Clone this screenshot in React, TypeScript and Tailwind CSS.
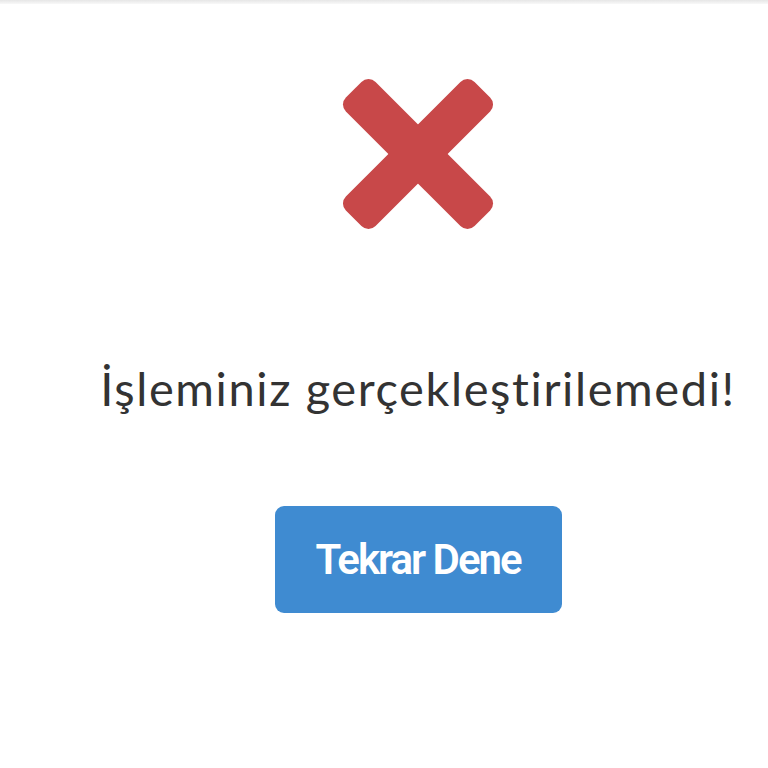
export default function App() {
  return (
    <div className="w-[768px] h-[768px] bg-white relative overflow-hidden">
      <div className="h-[4px] bg-gradient-to-b from-[#e6e6e6] to-[#f8f8f8]" />
      <div className="flex flex-col items-center pl-[68px]">
        <svg width="160" height="160" viewBox="0 0 160 160" className="mt-[70px]">
          <g transform="translate(80 80) rotate(45)" fill="#c84849">
            <rect x="-91" y="-21" width="182" height="42" rx="10" />
            <rect x="-21" y="-91" width="42" height="182" rx="10" />
          </g>
        </svg>
        <div
          className="mt-[126px] text-[47px] leading-[56px] tracking-[1.6px] text-[#333333] whitespace-nowrap"
          style={{ fontFamily: "Lato, 'Open Sans', sans-serif" }}
        >
          İşleminiz gerçekleştirilemedi!
        </div>
        <button
          className="mt-[90px] w-[287px] h-[107px] rounded-[9px] bg-[#3f8bd1] text-white text-[42px] font-semibold tracking-[-2px] flex items-center justify-center"
          style={{ fontFamily: "Roboto, 'Liberation Sans', sans-serif" }}
        >
          Tekrar Dene
        </button>
      </div>
    </div>
  );
}
